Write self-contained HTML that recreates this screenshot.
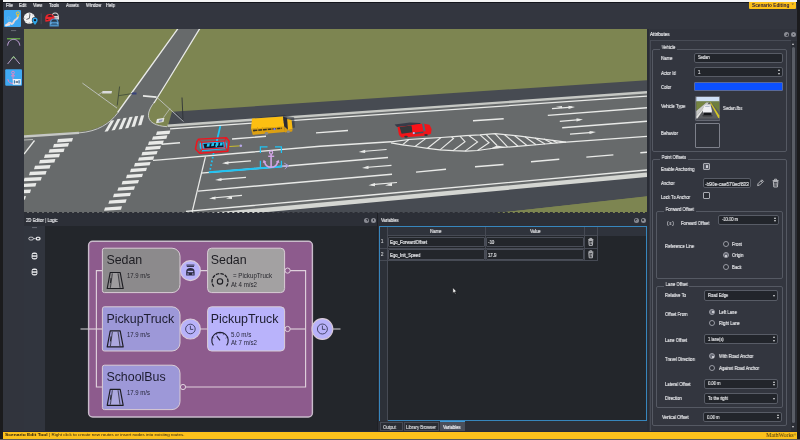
<!DOCTYPE html>
<html lang="en">
<head>
<meta charset="utf-8">
<title>Scenario Editing</title>
<style>
html,body{margin:0;padding:0;background:#1b1b1d;}
#app{position:relative;width:800px;height:440px;overflow:hidden;background:#1b1b1d;font-family:"Liberation Sans",sans-serif;color:#dcdde0;font-size:5.4px;line-height:1;}
#app *{box-sizing:border-box;}
.a{position:absolute;}
.t{position:absolute;white-space:nowrap;line-height:6px;height:6px;}
.lbl{position:absolute;white-space:nowrap;line-height:6px;height:6px;color:#e4e5e8;left:661px;}
.inp{position:absolute;background:#22252b;border:1px solid #585c66;border-radius:2px;color:#e2e3e6;line-height:8px;padding-left:3px;white-space:nowrap;overflow:hidden;}
.gb{position:absolute;border:1px solid #555963;border-radius:2px;}
.gbt{position:absolute;background:#33363f;padding:0 2px;line-height:6px;height:6px;white-space:nowrap;color:#e4e5e8;}
.spin:before,.spin:after{content:"";position:absolute;right:2px;border-left:1.6px solid transparent;border-right:1.6px solid transparent;}
.spin:before{top:1.4px;border-bottom:2px solid #d8d9dc;}
.spin:after{bottom:1.4px;border-top:2px solid #d8d9dc;}
.dd:after{content:"";position:absolute;right:2.5px;top:3.6px;border-left:1.8px solid transparent;border-right:1.8px solid transparent;border-top:2.2px solid #d8d9dc;}
.rad{position:absolute;width:6px;height:6px;border-radius:50%;border:0.75px solid #9a9ca5;background:#2d3038;}
.rad.on{background:#666974;}
.rad.on:after{content:"";position:absolute;left:1.15px;top:1.15px;width:2.2px;height:2.2px;border-radius:50%;background:#ecedf1;}
.rl{position:absolute;white-space:nowrap;line-height:6px;height:6px;color:#e4e5e8;}
.chk{position:absolute;width:7px;height:7px;border:0.8px solid #a9abb2;border-radius:1px;background:#2a2d34;}
.sx{transform:scaleX(.84) translateZ(0);will-change:transform;transform-origin:0 50%;font-size:5.1px;}
.ico{position:absolute;width:5.2px;height:5.2px;border-radius:50%;background:#8b8d95;}
.ico:after{content:"";position:absolute;left:1.8px;top:1.8px;width:1.6px;height:1.6px;border-radius:50%;background:#2c2f37;}
.ico.dm:after{left:1.5px;top:1.5px;width:2.2px;height:2.2px;border-radius:0;background:#2c2f37;transform:rotate(45deg);}
.ico.dm:before{content:"";position:absolute;z-index:1;left:2.1px;top:2.1px;width:1px;height:1px;background:#8b8d95;transform:rotate(45deg);}
.inp .sx{font-size:4.8px;}
.sx{-webkit-text-stroke:0.18px currentColor;}
</style>
</head>
<body>
<div id="app">
  <!-- top white strip -->
  <div class="a" style="left:3px;top:0;width:794px;height:2px;background:#f4f4f4;"></div>
  <!-- menu + toolbar background -->
  <div class="a" style="left:3px;top:2px;width:794px;height:26.5px;background:#33363f;"></div>
  <div class="a" style="left:3px;top:1.9px;width:794px;height:0.9px;background:#14161c;"></div>
  <!-- menu -->
  <div class="t sx" style="left:6px;top:2.4px;color:#e8e9ec;">File</div>
  <div class="t sx" style="left:19px;top:2.4px;color:#e8e9ec;">Edit</div>
  <div class="t sx" style="left:33px;top:2.4px;color:#e8e9ec;">View</div>
  <div class="t sx" style="left:49px;top:2.4px;color:#e8e9ec;">Tools</div>
  <div class="t sx" style="left:66px;top:2.4px;color:#e8e9ec;">Assets</div>
  <div class="t sx" style="left:86px;top:2.4px;color:#e8e9ec;">Window</div>
  <div class="t sx" style="left:106px;top:2.4px;color:#e8e9ec;">Help</div>
  <!-- Scenario Editing badge -->
  <div class="a" style="left:749px;top:2px;width:47.2px;height:6.8px;background:#fcc019;border-radius:0 0 1px 1px;"></div>
  <div class="t" style="left:751.8px;top:2.5px;color:#2a1c3a;font-weight:bold;font-size:4.5px;transform:scaleX(1.05) translateZ(0);transform-origin:0 50%;">Scenario Editing</div>
  <div class="t" style="left:791.6px;top:1.2px;color:#3a2c3a;font-size:3.6px;">˅</div>

  <!-- left tool column -->
  <div class="a" style="left:3px;top:28.5px;width:21px;height:403px;background:#31343d;"></div>

  <svg class="a" style="left:24px;top:28.5px;" width="623" height="184" viewBox="24 28.5 623 184">
<rect x="24" y="28" width="623" height="185" fill="#7d8551"/>
<path d="M24,135 L79,131.4 C98,130 110,122 117.6,112 L178,28 L199.8,28 L168,80 L154.5,101.5 C146,112 143.5,124.5 167,126.2 L647,91 L647,180 L230,216 L24,216 Z" fill="#676a6b"/>
<path d="M172,111.2 L647,79.8 L647,91.5 L168,125 Z" fill="#474b52"/>
<path d="M250,213 L647,175 L647,196 L491,213 Z" fill="#474b52"/>
<path d="M491,213 L647,195.8 L647,213 Z" fill="#7d8551"/>
<path d="M167.5,125.2 L647,91.8" stroke="#c6c8c4" stroke-width="2.4" fill="none"/>
<path d="M24,136 L79,132.4" stroke="#c6c8c4" stroke-width="2.4" fill="none"/>
<path d="M180,217.3 L360,200.8 L647,174.3" stroke="#d4d6d2" stroke-width="4.4" fill="none"/>
<path d="M79,132.4 C98,131 110,123 118,112" stroke="#c6c8c4" stroke-width="1" fill="none"/>
<path d="M154.5,101.5 C146,112 143.5,124.5 167,126.2" stroke="#c6c8c4" stroke-width="1" fill="none"/>
<path d="M178,28 L140.6,80 L117.6,112" stroke="#e9eae8" stroke-width="1.3" fill="none"/>
<path d="M199.8,28 L168,80 L154,102.5" stroke="#e9eae8" stroke-width="1.3" fill="none"/>
<path d="M170.0,128.3 L647.0,95.7" stroke="#e9eae8" stroke-width="1.25" fill="none" />
<path d="M232.0,138.5 L266.0,135.8" stroke="#e9eae8" stroke-width="1.4" fill="none" />
<path d="M316.0,132.4 L348.0,130.0" stroke="#e9eae8" stroke-width="1.4" fill="none" />
<path d="M473.0,120.2 L503.7,118.2" stroke="#e9eae8" stroke-width="1.4" fill="none" />
<path d="M161.5,143.8 L180.0,142.3" stroke="#e9eae8" stroke-width="1.4" fill="none" />
<path d="M547.8,114.9 L647.0,107.2" stroke="#e9eae8" stroke-width="1.4" fill="none" />
<path d="M562.2,127.3 L647.0,120.8" stroke="#e9eae8" stroke-width="1.4" fill="none" />
<path d="M160.0,159.4 L320.0,145.8 L391.0,141.3" stroke="#e9eae8" stroke-width="1.4" fill="none" />
<path d="M153.0,159.9 L160.0,159.4" stroke="#e9eae8" stroke-width="1.4" fill="none" />
<path d="M201.0,172.6 L388.0,157.0" stroke="#e9eae8" stroke-width="1.4" fill="none" />
<path d="M198.0,190.6 L392.0,173.8" stroke="#e9eae8" stroke-width="1.4" fill="none" />
<path d="M186.0,210.9 L360.0,195.5 L647.0,169.5" stroke="#e9eae8" stroke-width="1.35" fill="none" />
<path d="M205.5,156.0 L192.0,212.0" stroke="#e9eae8" stroke-width="1.2" fill="none" />
<path d="M391.0,141.3 L408.8,139.0 L426.0,137.9 L441.0,137.0 L454.0,136.2 L466.0,135.2 L480.0,134.4 L495.0,133.1 L520.0,135.6 L545.0,138.8 L566.0,141.6 L647.0,135.8" stroke="#e9eae8" stroke-width="1.25" fill="none" />
<path d="M391.0,142.4 L402.5,144.4 L415.0,146.0 L427.5,147.8 L440.0,149.4 L453.0,150.2 L466.0,150.6 L477.5,150.0 L495.0,147.5 L520.0,145.6 L545.0,143.5 L566.0,141.6" stroke="#e9eae8" stroke-width="1.25" fill="none" />
<path d="M402.5,144.4 L408.8,139.0" stroke="#e9eae8" stroke-width="1.15" fill="none" />
<path d="M415.0,146.0 L426.0,137.9" stroke="#e9eae8" stroke-width="1.15" fill="none" />
<path d="M427.5,147.8 L441.0,137.0" stroke="#e9eae8" stroke-width="1.15" fill="none" />
<path d="M440.0,149.4 L453.5,138.0 L451.5,136.4" stroke="#e9eae8" stroke-width="1.15" fill="none" />
<path d="M453.0,150.2 L465.0,141.2 L460.0,135.6" stroke="#e9eae8" stroke-width="1.15" fill="none" />
<path d="M465.0,150.6 L477.5,141.4 L468.8,135.0" stroke="#e9eae8" stroke-width="1.15" fill="none" />
<path d="M477.5,150.0 L489.0,142.3 L480.0,134.4" stroke="#e9eae8" stroke-width="1.15" fill="none" />
<path d="M486.0,133.8 L497.0,145.0" stroke="#e9eae8" stroke-width="1.15" fill="none" />
<path d="M495.0,133.1 L507.5,146.3" stroke="#e9eae8" stroke-width="1.15" fill="none" />
<path d="M504.4,134.0 L518.0,145.7" stroke="#e9eae8" stroke-width="1.15" fill="none" />
<path d="M514.4,135.0 L527.0,145.0" stroke="#e9eae8" stroke-width="1.15" fill="none" />
<path d="M525.0,136.2 L536.0,144.3" stroke="#e9eae8" stroke-width="1.15" fill="none" />
<path d="M535.0,137.5 L545.0,143.5" stroke="#e9eae8" stroke-width="1.15" fill="none" />
<path d="M544.0,138.6 L552.5,142.9" stroke="#e9eae8" stroke-width="1.15" fill="none" />
<path d="M552.5,139.8 L557.5,142.5" stroke="#e9eae8" stroke-width="1.15" fill="none" />
<path d="M497,145 L505.5,146.6 L498,147.8 L489,148.8 Z" fill="#e9eae8"/>
<path d="M416.0,171.6 L446.0,168.8" stroke="#e9eae8" stroke-width="1.4" fill="none" />
<path d="M475.0,166.3 L503.5,164.0" stroke="#e9eae8" stroke-width="1.4" fill="none" />
<path d="M531.0,161.3 L559.3,158.7" stroke="#e9eae8" stroke-width="1.4" fill="none" />
<path d="M586.3,156.6 L613.4,154.4" stroke="#e9eae8" stroke-width="1.4" fill="none" />
<path d="M640.3,152.2 L648.0,151.6" stroke="#e9eae8" stroke-width="1.4" fill="none" />
<path d="M225.0,162.4 L251.0,160.3" stroke="#e9eae8" stroke-width="1.2" fill="none" />
<path d="M222,162.8 L228.5,160.7 L228.5,163.9 Z" fill="#e9eae8"/>
<path d="M218.0,179.1 L246.0,176.8" stroke="#e9eae8" stroke-width="1.2" fill="none" />
<path d="M215,179.5 L221.5,177.4 L221.5,180.6 Z" fill="#e9eae8"/>
<path d="M212.0,197.5 L242.0,194.8" stroke="#e9eae8" stroke-width="1.2" fill="none" />
<path d="M209,198.0 L215.5,195.9 L215.5,199.1 Z" fill="#e9eae8"/>
<path d="M232,195.6 L226,198 L232,198.6 Z" fill="#e9eae8"/>
<path d="M361.7,151.0 L386.6,149.0" stroke="#e9eae8" stroke-width="1.2" fill="none" />
<path d="M358.7,151.4 L365.2,149.3 L365.2,152.5 Z" fill="#e9eae8"/>
<path d="M365.0,167.0 L391.5,164.8" stroke="#e9eae8" stroke-width="1.2" fill="none" />
<path d="M362,167.4 L368.5,165.3 L368.5,168.5 Z" fill="#e9eae8"/>
<path d="M371.5,184.2 L397.0,182.0" stroke="#e9eae8" stroke-width="1.2" fill="none" />
<path d="M368.5,184.7 L375.0,182.6 L375.0,185.8 Z" fill="#e9eae8"/>
<path d="M392,182.3 L385,185 L392,185.4 Z" fill="#e9eae8"/>
<path d="M552.0,108.2 L572.0,106.7" stroke="#e9eae8" stroke-width="1.2" fill="none" />
<path d="M575,106.5 L568.5,105.3 L568.5,108.5 Z" fill="#e9eae8"/>
<path d="M556,106.2 L562,107.7 L562,105.6 Z" fill="#e9eae8"/>
<path d="M559.8,120.8 L580.0,119.2" stroke="#e9eae8" stroke-width="1.2" fill="none" />
<path d="M583,119.0 L576.5,117.8 L576.5,121.0 Z" fill="#e9eae8"/>
<path d="M570.0,133.6 L593.0,131.8" stroke="#e9eae8" stroke-width="1.2" fill="none" />
<path d="M596,131.6 L589.5,130.4 L589.5,133.6 Z" fill="#e9eae8"/>
<path d="M104.5,131.2 L111.0,120.0 L114.2,119.7 L107.9,130.8 Z" fill="#e9eae8"/>
<path d="M111.5,130.0 L117.5,118.5 L120.7,118.2 L114.9,129.6 Z" fill="#e9eae8"/>
<path d="M118.5,129.0 L123.5,117.5 L126.7,117.2 L121.9,128.6 Z" fill="#e9eae8"/>
<path d="M125.0,128.0 L129.5,116.5 L132.7,116.2 L128.4,127.6 Z" fill="#e9eae8"/>
<path d="M131.5,126.5 L135.0,115.8 L138.2,115.5 L134.9,126.1 Z" fill="#e9eae8"/>
<path d="M138.0,125.0 L141.0,115.0 L144.2,114.7 L141.4,124.6 Z" fill="#e9eae8"/>
<path d="M58.0,138.4 L73.0,137.6 L72.0,141.1 L57.0,141.9 Z" fill="#e9eae8"/>
<path d="M54.0,143.4 L69.0,142.6 L68.0,146.1 L53.0,146.9 Z" fill="#e9eae8"/>
<path d="M49.6,148.8 L64.6,148.0 L63.6,151.5 L48.6,152.3 Z" fill="#e9eae8"/>
<path d="M45.0,154.0 L60.0,153.2 L59.0,156.7 L44.0,157.5 Z" fill="#e9eae8"/>
<path d="M40.0,159.4 L55.4,158.6 L54.4,162.1 L39.0,162.9 Z" fill="#e9eae8"/>
<path d="M35.0,165.2 L50.6,164.4 L49.6,167.9 L34.0,168.7 Z" fill="#e9eae8"/>
<path d="M30.0,171.2 L46.6,170.4 L45.6,173.9 L29.0,174.7 Z" fill="#e9eae8"/>
<path d="M24.6,177.2 L41.8,176.4 L40.8,179.9 L23.6,180.7 Z" fill="#e9eae8"/>
<path d="M19.0,183.4 L36.4,182.6 L35.4,186.1 L18.0,186.9 Z" fill="#e9eae8"/>
<path d="M14.0,189.8 L31.0,189.0 L30.0,192.5 L13.0,193.3 Z" fill="#e9eae8"/>
<path d="M9.0,196.4 L26.0,195.6 L25.0,199.1 L8.0,199.9 Z" fill="#e9eae8"/>
<path d="M157.0,131.1 L170.4,130.0 L169.4,133.4 L156.0,134.5 Z" fill="#e9eae8"/>
<path d="M153.0,135.9 L167.4,134.8 L166.4,138.2 L152.0,139.3 Z" fill="#e9eae8"/>
<path d="M149.0,141.1 L163.8,140.0 L162.8,143.4 L148.0,144.5 Z" fill="#e9eae8"/>
<path d="M146.0,146.3 L161.0,145.2 L160.0,148.6 L145.0,149.7 Z" fill="#e9eae8"/>
<path d="M142.4,151.5 L157.6,150.4 L156.6,153.8 L141.4,154.9 Z" fill="#e9eae8"/>
<path d="M139.0,156.9 L154.2,155.8 L153.2,159.2 L138.0,160.3 Z" fill="#e9eae8"/>
<path d="M135.0,162.5 L150.6,161.4 L149.6,164.8 L134.0,165.9 Z" fill="#e9eae8"/>
<path d="M131.0,168.3 L147.0,167.2 L146.0,170.6 L130.0,171.7 Z" fill="#e9eae8"/>
<path d="M127.0,174.3 L143.0,173.2 L142.0,176.6 L126.0,177.7 Z" fill="#e9eae8"/>
<path d="M122.6,180.5 L139.0,179.4 L138.0,182.8 L121.6,183.9 Z" fill="#e9eae8"/>
<path d="M118.4,186.9 L135.0,185.8 L134.0,189.2 L117.4,190.3 Z" fill="#e9eae8"/>
<path d="M114.0,193.3 L131.0,192.2 L130.0,195.6 L113.0,196.7 Z" fill="#e9eae8"/>
<path d="M109.4,199.9 L126.6,198.8 L125.6,202.2 L108.4,203.3 Z" fill="#e9eae8"/>
<path d="M105.0,206.9 L122.0,205.8 L121.0,209.2 L104.0,210.3 Z" fill="#e9eae8"/>
<path d="M34.5,140.0 L24.0,153.5" stroke="#e9eae8" stroke-width="1.3" fill="none" />
<path d="M24.0,139.5 L33.0,139.0" stroke="#b9bbb8" stroke-width="1.0" fill="none" />
<path d="M143.0,95.4 L156.5,96.6" stroke="#e9eae8" stroke-width="1.6" fill="none" />
<path d="M157,118.5 L164.5,117.2 L163.5,121.6 L156,122.8 Z" fill="#e2e4e0"/>
<path d="M159,119.4 L162.6,118.8 L162.2,120.8 L158.6,121.4 Z" fill="#8d93b8"/>
<path d="M82.4,82.6 L117.0,107.6" stroke="#c9cbd0" stroke-width="0.8" fill="none" />
<path d="M98.0,94.5 L102.5,91.5" stroke="#c9cbd0" stroke-width="0.7" fill="none" />
<path d="M102.5,90.6 L112,90.6 L111.5,93 L102,93 Z" fill="#d9dadc"/>
<path d="M119.6,86.0 L117.2,105.0" stroke="#3f4a3a" stroke-width="0.9" fill="none" />
<path d="M118.6,95.2 L134.0,92.8" stroke="#3f4a3a" stroke-width="0.8" fill="none" />
<rect x="132" y="92" width="4.5" height="2" fill="#39427c"/>
<path d="M156.5,96.5 L183.5,121.0" stroke="#c9cbd0" stroke-width="0.8" fill="none" />
<path d="M170.0,108.0 L163.5,117.0" stroke="#c9cbd0" stroke-width="0.7" fill="none" />
<path d="M182.0,97.0 L183.0,119.0" stroke="#2f3338" stroke-width="0.9" fill="none" />
<path d="M176.0,112.5 L183.3,120.0" stroke="#2f3338" stroke-width="0.8" fill="none" />
<path d="M250.5,120.5 L283,116.8 L285.5,118 L292.6,119.2 L293.5,129.5 L284.5,131.6 L252.6,134.6 L250.8,129 Z" fill="#2a2f3b" opacity="0.55" transform="translate(1.5,-2.5)"/>
<path d="M251,128 L284.3,125.6 L285,131.4 L252.8,134.4 Z" fill="#dca012"/>
<path d="M252,118.1 L283,116.1 L284.3,125.9 L251,128.3 Z" fill="#fcbf12"/>
<path d="M283,116.3 L287.2,117.2 L288,128.6 L284.3,125.9 Z" fill="#2b2c33"/>
<path d="M287.2,118.6 L291.6,119.6 L292.6,128.8 L288,129.6 Z" fill="#f6b812"/>
<path d="M284.3,126 L288,129.4 L292.6,128.8 L292.2,131 L285,132 Z" fill="#d99c10"/>
<path d="M253,129.3 L282,127 L282.1,128.6 L253.2,130.9 Z" fill="#3a3320"/>
<rect x="257.3" y="126.6" width="0.9" height="4.6" fill="#dca012" transform="rotate(-4 257.3 129)"/>
<rect x="262" y="126.6" width="0.9" height="4.6" fill="#dca012" transform="rotate(-4 262 129)"/>
<rect x="266.8" y="126.6" width="0.9" height="4.6" fill="#dca012" transform="rotate(-4 266.8 129)"/>
<rect x="271.5" y="126.6" width="0.9" height="4.6" fill="#dca012" transform="rotate(-4 271.5 129)"/>
<rect x="276.3" y="126.6" width="0.9" height="4.6" fill="#dca012" transform="rotate(-4 276.3 129)"/>
<rect x="280.5" y="126.6" width="0.9" height="4.6" fill="#dca012" transform="rotate(-4 280.5 129)"/>
<circle cx="274.5" cy="128.6" r="1.2" fill="#7b7cf0"/>
<ellipse cx="266.5" cy="132.9" rx="1.8" ry="1.3" fill="#8a8a88"/>
<ellipse cx="288.3" cy="131.2" rx="1.6" ry="1.2" fill="#8a8a88"/>
<path d="M394.6,124 L410,122 L420,122.4 L421,124 L397,126.6 Z" fill="#2c3040" opacity="0.8"/>
<path d="M397.5,126.5 L424,123.2 L429.5,124.2 L431.6,128.5 L431,133.3 L425.5,135.3 L401.5,137 L399,134.5 Z" fill="#f0151a"/>
<path d="M399.6,126.6 L411.6,125 L412.6,131.8 L401.6,133.2 Z" fill="#35373a"/>
<path d="M411.6,124.4 L422,123.2 L423.4,130.6 L412.6,131.8 Z" fill="#fb1218"/>
<path d="M422,123.2 L424.2,123.6 L425.6,131 L423.4,130.6 Z" fill="#4a6a78"/>
<path d="M413.2,132.2 L423.3,131 L423.5,132.6 L413.4,133.8 Z" fill="#45505c"/>
<circle cx="413.8" cy="132.6" r="1.1" fill="#c8b8f4"/>
<ellipse cx="406" cy="136.3" rx="1.8" ry="1" fill="#33363b"/>
<ellipse cx="426" cy="134.6" rx="1.8" ry="1" fill="#33363b"/>
<path d="M220.3,125.6 L216.8,140.5" stroke="#1fc4f4" stroke-width="1.8" fill="none" />
<path d="M213.6,152.6 L209.8,171.0" stroke="#1fc4f4" stroke-width="1.7" fill="none" stroke-dasharray="1.7 2.1"/>
<path d="M208.8,171.8 L245.0,168.9 L281.8,165.9" stroke="#1fc4f4" stroke-width="2.0" fill="none" />
<path d="M199.8,142.6 L224.8,140.4 L227.2,143 L226.6,148 L203,150.6 L199.8,147.8 Z" fill="#1fb6ee"/>
<path d="M203.4,143.4 L223,141.8 L223.6,146.4 L204.6,148 Z" fill="#0f1726"/>
<path d="M206.6,146.2 l2.8,-0.3 l0.4,-3 l-2.4,0.2 Z" fill="#22c6f6"/>
<path d="M211,145.8 l2.8,-0.3 l0.4,-3 l-2.4,0.2 Z" fill="#22c6f6"/>
<path d="M215.4,145.5 l2.8,-0.3 l0.4,-3 l-2.4,0.2 Z" fill="#22c6f6"/>
<path d="M219.6,145.2 l2.8,-0.3 l0.4,-3 l-2.4,0.2 Z" fill="#22c6f6"/>
<path d="M201.6,150 L226,147.7" stroke="#1fb6ee" stroke-width="1.7" fill="none"/>
<path d="M200.2,143.2 L200.6,147.6" stroke="#22c6f6" stroke-width="1.2" fill="none"/>
<path d="M217.2,139.0 L216.2,146.6" stroke="#1fc4f4" stroke-width="1.6" fill="none" />
<path d="M198.5,138.6 L226.4,137.3 L229.2,141 L227.8,150.7 L199.7,152.7 L195.5,148.5 L197,141 Z" fill="none" stroke="#f0141e" stroke-width="1.45" stroke-linejoin="round"/>
<path d="M201.6,141.7 L224.7,140.5 L225.5,147.3 L202.2,148.8 Z" fill="none" stroke="#f0141e" stroke-width="1.1"/>
<path d="M198.5,138.6 L201.6,141.7 M226.4,137.3 L224.7,140.5 M227.8,150.7 L225.5,147.3 M199.7,152.7 L202.2,148.8" stroke="#f0141e" stroke-width="1" fill="none"/>
<path d="M229.4,146.0 L239.6,145.4" stroke="#c9bc2c" stroke-width="1.0" fill="none" />
<circle cx="240.8" cy="145.3" r="1.3" fill="#b9a8ea"/>
<path d="M260.4,152.4 L260.4,146.4 L267.5,146.4 M275,146.4 L281.4,146.4 L281.4,152.4 M260.4,160.2 L260.4,166.8 M281.4,160.2 L281.4,166" stroke="#1fc4f4" stroke-width="1.25" fill="none"/>
<circle cx="271.1" cy="151.9" r="1.6" fill="none" stroke="#d3a4e6" stroke-width="1.2"/>
<path d="M271.1,153.4 L271.1,167.2" stroke="#d3a4e6" stroke-width="1.6" fill="none"/>
<path d="M268.2,155.8 L274.2,155.8" stroke="#d3a4e6" stroke-width="1.4" fill="none"/>
<path d="M264.4,161 C265.4,165 268,166.8 271.1,166.8 C274.2,166.8 276.8,165 277.8,161" stroke="#d3a4e6" stroke-width="1.5" fill="none"/>
<path d="M262.8,162.4 L263.6,159.2 L266.4,161.4 Z M279.4,162.4 L278.6,159.2 L275.8,161.4 Z" fill="#d3a4e6"/>
<path d="M282,166 L288.4,165.2 M284.2,162.6 L288.6,165.2 L284.8,168.4" stroke="#aa9cdc" stroke-width="1" fill="none"/>
</svg>
    <!-- top toolbar icons -->
  <div class="a" style="left:4.2px;top:10.4px;width:17px;height:16.8px;background:#3fa9f3;border-radius:1px;"></div>
  <svg class="a" style="left:0;top:0;" width="70" height="90" viewBox="0 0 70 90">
    <!-- route icon -->
    <path d="M6.2,25.2 C8,24.2 8.6,22.4 10,22.6 C11.4,22.8 11,24.6 12.4,23.8 C14.4,22.6 13.4,20.4 15.6,19.6 C17,19 17.6,18 17.8,16.8" stroke="#e4d6d8" stroke-width="1.9" fill="none" stroke-linecap="round"/>
    <path d="M6,25.4 L9.6,24.6" stroke="#efe6e6" stroke-width="1.6" stroke-linecap="round"/>
    <circle cx="8.6" cy="18.2" r="1.5" fill="none" stroke="#62b4ea" stroke-width="0.9"/>
    <path d="M7.6,19.3 L8.6,21.6 L9.6,19.3" stroke="#62b4ea" stroke-width="0.8" fill="none"/>
    <circle cx="17.8" cy="13.4" r="1.5" fill="none" stroke="#f1c42e" stroke-width="1"/>
    <path d="M16.7,14.5 L17.8,16.9 L18.9,14.5" stroke="#f1c42e" stroke-width="0.9" fill="none"/>
    <!-- clock icon -->
    <circle cx="29.3" cy="18.2" r="5.6" fill="#f3f3f3"/>
    <path d="M30,13.8 L29.3,18.4 L26.4,19.4" stroke="#3a3c42" stroke-width="0.8" fill="none"/>
    <path d="M29.3,13 v1.1 M29.3,22.3 v1.1 M24.1,18.2 h1.1 M33.4,18.2 h1.1 M25.6,14.5 l.7,.7 M33,14.5 l-.7,.7 M25.6,21.9 l.7,-.7" stroke="#6a6c72" stroke-width="0.55"/>
    <path d="M35,26 C32.8,22.8 31.8,21.8 31.8,20.2 A3.2,3.2 0 1 1 38.2,20.2 C38.2,21.8 37.2,22.8 35,26 Z" fill="#33363f"/>
    <path d="M35,25 C33.2,22.4 32.4,21.6 32.4,20.2 A2.6,2.6 0 1 1 37.6,20.2 C37.6,21.6 36.8,22.4 35,25 Z" fill="#2fa6ea"/>
    <circle cx="35" cy="20.2" r="1.15" fill="#14161c"/>
    <!-- separator -->
    <path d="M41.2,13.4 L41.2,24.2" stroke="#555963" stroke-width="0.6"/>
    <!-- cars icon -->
    <path d="M51.4,17.4 C51.6,13.8 52.8,12.4 55.2,12.4 C57.6,12.4 58.8,13.8 59,17.4 L59,19.6 L51.4,19.6 Z" fill="#d9d7d8"/>
    <path d="M52.6,16 C52.8,14.2 53.6,13.5 55.2,13.5 C56.8,13.5 57.6,14.2 57.8,16 Z" fill="#33363f"/>
    <rect x="52.8" y="17.4" width="4.8" height="0.9" fill="#8d8f96"/>
    <path d="M45.2,17.6 C45.6,15 47.4,14 49.8,14 C52.2,14 53.8,15 54.4,16.8 L54.6,18.2 L53.6,20.4 L47.4,21.4 L45.4,21.8 Z" fill="#e9262d"/>
    <path d="M47.4,16.8 C48,15.5 49,15.1 50.2,15.1 C51.4,15.1 52.4,15.6 52.8,16.8 Z" fill="#3a2328"/>
    <path d="M46.4,19 h2 v0.9 h-2 Z" fill="#3a2328"/>
    <path d="M49.8,22 C50.2,19.4 51.6,18.4 54.2,18.4 C56.8,18.4 58.2,19.4 58.6,22 L58.8,22.6 L58.8,26.4 L49.6,26.4 L49.6,22.6 Z" fill="#4b90c6"/>
    <path d="M51.2,21.8 C51.5,20.1 52.6,19.5 54.2,19.5 C55.8,19.5 56.9,20.1 57.2,21.8 Z" fill="#283848"/>
    <rect x="51.2" y="23.6" width="6" height="1" fill="#2c4660"/>
    <path d="M50.2,22.8 h1.4 v0.8 h-1.4 Z M56.8,22.8 h1.4 v0.8 h-1.4 Z" fill="#a8d2f0"/>
    <!-- left column: handle -->
    <path d="M11,30.6 L16.2,30.6" stroke="#7f828c" stroke-width="0.7"/>
    <!-- arc icon -->
    <path d="M7,38.8 L20.2,38.8" stroke="#74c04a" stroke-width="1.1"/>
    <path d="M7.6,45.6 C8,41.6 10.6,39.4 13.6,39.4 C16.6,39.4 19.4,41.6 19.8,45.6" stroke="#c3a2da" stroke-width="1" fill="none"/>
    <!-- caret icon -->
    <path d="M7.6,64 L13.6,56.6 L19.8,64" stroke="#b79fc8" stroke-width="1" fill="none"/>
    <path d="M11.8,58.8 L13.6,56.6 L15.4,58.8" stroke="#8fd07a" stroke-width="1" fill="none"/>
    <!-- selected anchor tool -->
    <rect x="5.2" y="69.2" width="16.8" height="16.6" rx="1" fill="#3fa9f3"/>
    <circle cx="13" cy="72.6" r="1.4" fill="none" stroke="#ef84c0" stroke-width="0.9"/>
    <path d="M13,74 L13,80.4 M11,75.8 L15,75.8" stroke="#ef84c0" stroke-width="0.9" fill="none"/>
    <path d="M7.8,79.2 C8.4,82.4 10.6,83.6 13,83.4" stroke="#ef84c0" stroke-width="1" fill="none"/>
    <path d="M12.8,79 h8 v5.8 h-8 Z" fill="#eef3f8"/>
    <path d="M13.8,80.2 h1.2 v3.4 h-1.2 Z M18.4,80.2 h1.4 v3.4 h-1.4 Z" fill="#3f7fb8"/>
    <path d="M15.6,81.2 h2.4 v1.6 h-2.4 Z" fill="#5a6a80"/>
  </svg>

  <div class="a" style="left:24px;top:212px;width:623.5px;height:0;border-top:0.9px dashed #2b2d34;"></div>
  <div class="a" style="left:646.6px;top:28.5px;width:0;height:184px;border-left:0.9px dashed #2b2d34;"></div>
    <!-- 2D Editor | Logic panel -->
  <div class="a" style="left:24px;top:213px;width:353.5px;height:13px;background:#2c2f37;"></div>
  <div class="a" style="left:24px;top:226px;width:20.5px;height:205.5px;background:#31353e;"></div>
  <div class="a" style="left:44.5px;top:226px;width:333px;height:205.5px;background:#23262b;"></div>
  <div class="t sx" style="left:25.5px;top:217px;color:#e6e7ea;">2D Editor | Logic</div>
  <div class="ico dm" style="left:364px;top:217.5px;"></div>
  <div class="ico" style="left:371px;top:217.5px;"></div>
  <svg class="a" style="left:24px;top:213px;" width="354" height="218" viewBox="24 213 354 218" font-family="'Liberation Sans',sans-serif">
    <!-- sidebar icons -->
    <path d="M32,227.6 L37,227.6" stroke="#7f828c" stroke-width="0.7"/>
    <rect x="28.8" y="237.2" width="4.6" height="2.8" rx="1.4" fill="none" stroke="#e4e5e8" stroke-width="0.8"/>
    <rect x="35.6" y="236.8" width="5" height="3.6" rx="1.6" fill="#e4e5e8"/>
    <rect x="37" y="237.9" width="2.2" height="1.3" fill="#31353e"/>
    <path d="M33.4,238.6 L35.6,238.6" stroke="#e4e5e8" stroke-width="0.8"/>
    <rect x="31.6" y="252.6" width="5.8" height="7" rx="2.4" fill="#e4e5e8"/>
    <rect x="32.6" y="254" width="3.8" height="1.3" fill="#31353e"/>
    <rect x="32.6" y="256.8" width="3.8" height="1.3" fill="#31353e"/>
    <rect x="31.6" y="268.6" width="5.8" height="7" rx="2.4" fill="#e4e5e8"/>
    <rect x="32.6" y="270" width="3.8" height="1.3" fill="#31353e"/>
    <rect x="32.6" y="272.8" width="3.8" height="1.3" fill="#31353e"/>
    <!-- outer lines -->
    <path d="M80.5,329 L88.5,329 M333,329 L340.5,329" stroke="#d9d5da" stroke-width="1"/>
    <!-- purple container -->
    <rect x="88.6" y="241.2" width="223.8" height="175.8" rx="4" fill="#8d5b8d" stroke="#c9bccb" stroke-width="1.4"/>
    <!-- wires -->
    <g stroke="#dfd0dc" stroke-width="1.15" fill="none">
      <path d="M88.6,329 L102,329"/>
      <path d="M102,270.6 L96.4,270.6 L96.4,387 L102,387"/>
      <path d="M180,270.6 L207.6,270.6 M180,329 L207.6,329"/>
      <path d="M290,270.6 L305.6,270.6 L305.6,387 L186,387"/>
      <path d="M290,329 L305.6,329"/>
    </g>
    <!-- node: Sedan (speed) -->
    <path d="M104.4,248.2 H172 A8,8 0 0 1 180,256.2 V284.6 A8,8 0 0 1 172,292.6 H104.4 A2,2 0 0 1 102.4,290.6 V250.2 A2,2 0 0 1 104.4,248.2 Z" fill="#8c8a8c" stroke="#d9cdd6" stroke-width="1"/>
    <text x="106.4" y="264.3" font-size="12.4" fill="#1d1d22">Sedan</text>
    <text x="127" y="278.2" font-size="6.7" textLength="23" lengthAdjust="spacingAndGlyphs" fill="#26262c">17.9 m/s</text>
    <g id="lane" fill="none">
      <path d="M112.2,272.8 L118.2,272.8 L120,288.2 L110.4,288.2 Z" fill="#ffffff" fill-opacity="0.16" stroke="none"/>
      <path d="M110.2,272.5 L120.2,272.5 L123.2,288.5 L107.2,288.5 Z" stroke="#1d1d22" stroke-width="1.15" stroke-linejoin="round"/>
      <path d="M112.4,273.4 L110.4,287.8 M118,273.4 L120,287.8" stroke="#1d1d22" stroke-width="0.7"/>
      <path d="M111,278 L110.4,283" stroke="#1d1d22" stroke-width="0.9"/>
    </g>
    <!-- node: PickupTruck (speed) -->
    <path d="M104.4,306.8 H172 A8,8 0 0 1 180,314.8 V343 A8,8 0 0 1 172,351 H104.4 A2,2 0 0 1 102.4,349 V308.8 A2,2 0 0 1 104.4,306.8 Z" fill="#9d98d8" stroke="#d9cdd6" stroke-width="1"/>
    <text x="106.4" y="322.7" font-size="12.4" fill="#1d1d30">PickupTruck</text>
    <text x="127" y="336.6" font-size="6.7" textLength="23" lengthAdjust="spacingAndGlyphs" fill="#26263a">17.9 m/s</text>
    <use href="#lane" y="58.4"/>
    <!-- node: SchoolBus -->
    <path d="M104.4,365.2 H172 A8,8 0 0 1 180,373.2 V401.6 A8,8 0 0 1 172,409.6 H104.4 A2,2 0 0 1 102.4,407.6 V367.2 A2,2 0 0 1 104.4,365.2 Z" fill="#9d98d8" stroke="#d9cdd6" stroke-width="1"/>
    <text x="106.4" y="381.2" font-size="12.4" fill="#1d1d30">SchoolBus</text>
    <text x="127" y="395" font-size="6.7" textLength="23" lengthAdjust="spacingAndGlyphs" fill="#26263a">17.9 m/s</text>
    <use href="#lane" y="116.8"/>
    <!-- node: Sedan (action) -->
    <rect x="207.6" y="248.2" width="77" height="44.4" rx="4" fill="#a3a1a2" stroke="#d9cdd6" stroke-width="1"/>
    <text x="210.8" y="264.3" font-size="12.4" fill="#1d1d22">Sedan</text>
    <text x="233" y="278.4" font-size="6.7" textLength="39" lengthAdjust="spacingAndGlyphs" fill="#26262c">= PickupTruck</text>
    <text x="231" y="286.6" font-size="6.7" textLength="26" lengthAdjust="spacingAndGlyphs" fill="#26262c">At 4 m/s2</text>
    <g stroke="#1d1d22" fill="none">
      <path d="M213.8,286.6 A8,8 0 1 1 226.2,286.6" stroke-width="1.3" stroke-dasharray="3.4 1.1"/>
      <circle cx="220" cy="281.4" r="2.7" stroke-width="1.1"/>
    </g>
    <!-- node: PickupTruck (action) -->
    <rect x="207.6" y="306.8" width="77" height="44.2" rx="4" fill="#b9b3fb" stroke="#d9cdd6" stroke-width="1"/>
    <text x="210.8" y="322.7" font-size="12.4" fill="#1d1d30">PickupTruck</text>
    <text x="231" y="336.8" font-size="6.7" textLength="20.3" lengthAdjust="spacingAndGlyphs" fill="#26263a">5.0 m/s</text>
    <text x="231" y="345.2" font-size="6.7" textLength="26" lengthAdjust="spacingAndGlyphs" fill="#26263a">At 7 m/s2</text>
    <g stroke="#1d1d30" fill="none">
      <path d="M213.4,345.4 A8.2,8.2 0 1 1 226.6,345.4" stroke-width="1.1"/>
      <path d="M220,340.4 L216.8,336.2" stroke-width="1.1"/>
      <path d="M213.4,337.6 l1,0.6 M216.4,334.2 l0.5,1 M220,333 l0,1.1 M223.6,334.2 l-0.5,1 M226.6,337.6 l-1,0.6" stroke-width="0.6"/>
    </g>
    <!-- ports -->
    <g fill="#8d5b8d" stroke="#e0d2de" stroke-width="1">
      <circle cx="287.6" cy="270.6" r="2.6"/>
      <circle cx="287.6" cy="329" r="2.6"/>
      <circle cx="183" cy="387" r="2.6"/>
    </g>
    <!-- condition circles -->
    <g fill="#b8b2fa" stroke="#dacbd8" stroke-width="1.1">
      <circle cx="190.4" cy="270.6" r="10"/>
      <circle cx="190.4" cy="329" r="10"/>
      <circle cx="322.4" cy="329" r="10.4"/>
    </g>
    <!-- car icon in circle -->
    <g fill="#2a2a40">
      <rect x="186.4" y="264.6" width="8" height="1" />
      <rect x="186.8" y="266" width="7.2" height="0.9" />
      <path d="M186.2,272 C186.2,269 187.6,268 190.4,268 C193.2,268 194.6,269 194.6,272 L194.6,275.4 L186.2,275.4 Z"/>
    </g>
    <path d="M187.6,270.8 h5.6 v1.4 h-5.6 Z" fill="#b8b2fa"/>
    <path d="M187.2,273.4 h1.6 v1 h-1.6 Z M192,273.4 h1.6 v1 h-1.6 Z" fill="#b8b2fa"/>
    <!-- clock icons -->
    <g stroke="#3a3a5c" fill="none" stroke-width="0.9">
      <circle cx="190.4" cy="329" r="4.8"/>
      <path d="M190.4,325.8 L190.4,329.4 L193.2,329.4"/>
      <circle cx="322.4" cy="329" r="5"/>
      <path d="M322.4,325.6 L322.4,329.4 L325.4,329.4"/>
    </g>
  </svg>

    <!-- Variables panel -->
  <div class="a" style="left:377.5px;top:213px;width:270px;height:218.5px;background:#2c2f37;"></div>
  <div class="a" style="left:377.3px;top:213px;width:0.8px;height:218.5px;background:#1e2025;"></div>
  <div class="t sx" style="left:380.5px;top:217px;color:#e6e7ea;">Variables</div>
  <div class="ico dm" style="left:633.8px;top:217.5px;"></div>
  <div class="ico" style="left:640.6px;top:217.5px;"></div>
  <div class="a" style="left:378.6px;top:225.8px;width:268.2px;height:195.2px;background:#23262b;border:0.9px solid #3786bd;"></div>
  <!-- header row -->
  <div class="a" style="left:379.5px;top:226.6px;width:266.4px;height:9px;background:#2f333c;"></div>
  <div class="a" style="left:379.5px;top:226.6px;width:7.6px;height:194px;background:#2c3038;"></div>
  <div class="a" style="left:386.8px;top:226.6px;width:0.7px;height:194px;background:#464a54;"></div>
  <div class="a" style="left:387px;top:235.4px;width:210px;height:0.7px;background:#464a54;"></div>
  <div class="a" style="left:485px;top:226.6px;width:0.7px;height:34px;background:#464a54;"></div>
  <div class="a" style="left:584px;top:226.6px;width:0.7px;height:34px;background:#464a54;"></div>
  <div class="a" style="left:597px;top:226.6px;width:0.7px;height:34px;background:#464a54;"></div>
  <div class="t sx" style="left:430px;top:228.2px;color:#e0e1e4;">Name</div>
  <div class="t sx" style="left:530px;top:228.2px;color:#e0e1e4;">Value</div>
  <!-- rows -->
  <div class="a" style="left:379.5px;top:247.8px;width:218px;height:0.7px;background:#464a54;"></div>
  <div class="a" style="left:379.5px;top:260.2px;width:218px;height:0.7px;background:#464a54;"></div>
  <div class="a" style="left:387.6px;top:236.6px;width:97px;height:10.8px;border:0.7px solid #4a4e58;border-radius:1px;"></div>
  <div class="a" style="left:486px;top:236.6px;width:97.6px;height:10.8px;border:0.7px solid #4a4e58;border-radius:1px;"></div>
  <div class="a" style="left:387.6px;top:249px;width:97px;height:10.8px;border:0.7px solid #4a4e58;border-radius:1px;"></div>
  <div class="a" style="left:486px;top:249px;width:97.6px;height:10.8px;border:0.7px solid #4a4e58;border-radius:1px;"></div>
  <div class="t sx" style="left:381.4px;top:239.2px;color:#d8d9dc;font-size:4.6px;">1</div>
  <div class="t sx" style="left:381.2px;top:251.6px;color:#d8d9dc;font-size:4.6px;">2</div>
  <div class="t sx" style="left:389.5px;top:239.2px;color:#e6e7ea;">Ego_ForwardOffset</div>
  <div class="t sx" style="left:389.5px;top:251.6px;color:#e6e7ea;">Ego_Init_Speed</div>
  <div class="t sx" style="left:488px;top:239.2px;color:#e6e7ea;">-10</div>
  <div class="t sx" style="left:488px;top:251.6px;color:#e6e7ea;">17.9</div>
  <svg class="a" style="left:584px;top:236px;" width="14" height="26" viewBox="584 236 14 26">
    <g id="trash" stroke="#d6d7da" stroke-width="0.8" fill="none">
      <path d="M588.2,239.6 h5.2 M589.8,239.4 v-1 h2 v1 M588.8,240.4 l0.4,5 h3.2 l0.4,-5 Z"/>
      <path d="M590.1,241.6 v2.6 M591.5,241.6 v2.6" stroke-width="0.6"/>
    </g>
    <use href="#trash" y="12.4"/>
  </svg>
  <!-- tabs -->
  <div class="a" style="left:379.5px;top:421.6px;width:23px;height:9.4px;background:#2a2d34;border:0.7px solid #474b55;"></div>
  <div class="a" style="left:403.5px;top:421.6px;width:35px;height:9.4px;background:#2a2d34;border:0.7px solid #474b55;"></div>
  <div class="a" style="left:439.5px;top:421.2px;width:25.4px;height:9.8px;background:#4a4f5a;border-top:1px solid #3f9ad6;"></div>
  <div class="t sx" style="left:383.4px;top:423.6px;color:#d8d9dc;">Output</div>
  <div class="t sx" style="left:406px;top:423.6px;color:#d8d9dc;">Library Browser</div>
  <div class="t sx" style="left:442.6px;top:423.6px;color:#eeeff2;">Variables</div>
  <!-- mouse cursor -->
  <svg class="a" style="left:451.6px;top:287px;" width="6" height="8.2" viewBox="0 0 8 11">
    <path d="M1,0.6 L1,8.6 L2.9,6.9 L4.2,9.9 L5.4,9.4 L4.1,6.5 L6.6,6.4 Z" fill="#f4f4f4" stroke="#0c0d10" stroke-width="0.9"/>
  </svg>

    <!-- Attributes panel -->
  <div class="a" style="left:647px;top:28.5px;width:2.4px;height:403px;background:#2a2d35;"></div>
  <div class="a" style="left:649.2px;top:28.5px;width:147.4px;height:403px;background:#33363f;"></div>
  <div class="a" style="left:649.6px;top:28.5px;width:147px;height:11.6px;background:#30333c;"></div>
  <div class="a" style="left:649.6px;top:40px;width:141px;height:390.6px;border:0.8px solid #474b55;border-right:none;border-bottom:none;"></div>
  <div class="t" style="left:650.1px;top:30.9px;color:#e6e7ea;font-size:5px;-webkit-text-stroke:0.18px currentColor;transform:scaleX(.93) translateZ(0);transform-origin:0 50%;">Attributes</div>
  <div class="ico dm" style="left:784px;top:32px;"></div>
  <div class="ico" style="left:791px;top:32px;"></div>
  <!-- scrollbar -->
  <div class="a" style="left:790.6px;top:40.6px;width:6px;height:390.6px;background:#2c2f37;"></div>
  <div class="a" style="left:791.6px;top:47.4px;width:3.8px;height:375.2px;background:#595d66;border-radius:1.6px;"></div>
  <div class="a" style="left:791.6px;top:42.6px;width:0;height:0;border-left:1.9px solid transparent;border-right:1.9px solid transparent;border-bottom:2.6px solid #cfd0d4;"></div>
  <div class="a" style="left:791.6px;top:426.4px;width:0;height:0;border-left:1.9px solid transparent;border-right:1.9px solid transparent;border-top:2.6px solid #cfd0d4;"></div>

  <!-- Vehicle group -->
  <div class="gb" style="left:652.4px;top:48.6px;width:134.8px;height:103.6px;"></div>
  <div class="gbt sx" style="left:660px;top:44px;">Vehicle</div>
  <div class="lbl sx" style="top:55px;">Name</div>
  <div class="inp" style="left:694.4px;top:52.6px;width:88.8px;height:10px;"><span class="a sx" style="left:3px;top:1.9px;line-height:6px;">Sedan</span></div>
  <div class="lbl sx" style="top:69.6px;">Actor Id</div>
  <div class="inp spin" style="left:694.4px;top:67px;width:88.8px;height:10px;"><span class="a sx" style="left:3px;top:1.9px;line-height:6px;">1</span></div>
  <div class="lbl sx" style="top:84px;">Color</div>
  <div class="a" style="left:694.4px;top:81.8px;width:88.8px;height:9.4px;background:#0b50ff;border:0.6px solid #5a6a9a;border-radius:1px;"></div>
  <div class="lbl sx" style="top:103px;">Vehicle Type</div>
  <svg class="a" style="left:694.7px;top:96px;" width="25.3" height="25" viewBox="694.7 96 25.3 25">
    <rect x="695.1" y="96.4" width="24.5" height="24.2" rx="1" fill="#4a4d56" stroke="#7d808a" stroke-width="0.7"/>
    <rect x="696" y="97" width="23" height="21.6" fill="#5c5e61"/>
    <rect x="696" y="97" width="23" height="4.5" fill="#cfdff6"/>
    <rect x="696" y="101.3" width="23" height="1.3" fill="#7d8f4c"/>
    <path d="M696,102.5 L706,102.5 L696,111 Z" fill="#76853f"/>
    <path d="M706,102.5 L707.6,102.5 L696,116.6 L696,111 Z" fill="#c9cac8"/>
    <path d="M707.6,102.5 L708.4,102.5 L697,118.6 L696,118.6 L696,116.6 Z" fill="#e6e6e4"/>
    <path d="M711,102.5 L719,102.5 L719,112 Z" fill="#6f7f3c"/>
    <path d="M709.6,102.5 L710.6,102.5 L719,115.4 L719,118 L718,118 Z" fill="#d6c824"/>
    <path d="M706,104.2 h4.4 l0.6,1.6 h-5.6 Z" fill="#d8d8da"/>
    <path d="M703.4,107.4 C703.6,105.6 704.6,105 707,105 C709.4,105 710.6,105.6 710.9,107.4 L711.6,110.6 L711.4,113.4 L702.8,113.4 L702.6,110.6 Z" fill="#f1f1f4"/>
    <path d="M704.4,107 C704.8,106 705.6,105.7 707,105.7 C708.4,105.7 709.4,106 709.8,107 Z" fill="#b4bccb"/>
    <path d="M703,112.6 h8.4 l-0.4,2.6 h-7.6 Z" fill="#17181c"/>
    <path d="M702,115 h10.4 l-0.6,1.6 h-9.2 Z" fill="#3c3d40"/>
  </svg>
  <div class="t sx" style="left:723.4px;top:105px;color:#e4e5e8;">Sedan.fbx</div>
  <div class="lbl sx" style="top:130.4px;">Behavior</div>
  <div class="a" style="left:694.8px;top:123px;width:25px;height:25.2px;border:0.8px solid #7d808a;border-radius:1px;background:#30333b;"></div>

  <!-- Point Offsets group -->
  <div class="gb" style="left:652.4px;top:159.2px;width:134.8px;height:266.8px;"></div>
  <div class="gbt sx" style="left:660px;top:154.2px;">Point Offsets</div>
  <div class="lbl sx" style="top:165.6px;">Enable Anchoring</div>
  <div class="chk" style="left:703.4px;top:163px;background:#565963;"><span class="a" style="left:1.3px;top:1.3px;width:2.8px;height:2.8px;background:#cfd0d6;border-radius:0.6px;"></span></div>
  <div class="lbl sx" style="top:180px;">Anchor</div>
  <div class="inp" style="left:702.6px;top:178px;width:48.6px;height:10px;padding:0;"><span class="a sx" style="left:1.4px;top:1.7px;line-height:6px;font-size:5.7px;">-b90e-cae570ecf833</span></div>
  <svg class="a" style="left:755px;top:177px;" width="28" height="12" viewBox="755 177 28 12">
    <g stroke="#d6d7da" stroke-width="0.8" fill="none">
      <path d="M757.6,185.6 l0.5,-2 l3.8,-3.8 l1.5,1.5 l-3.8,3.8 Z M760.8,180.9 l1.5,1.5"/>
      <path d="M772.6,180.6 h6 M774.6,180.4 v-1.2 h2 v1.2 M773.3,181.4 l0.5,5.6 h3.6 l0.5,-5.6 Z"/>
      <path d="M774.9,182.6 v3.2 M776.3,182.6 v3.2" stroke-width="0.6"/>
    </g>
  </svg>
  <div class="lbl sx" style="top:194.1px;">Lock To Anchor</div>
  <div class="chk" style="left:703.4px;top:192.2px;"></div>

  <!-- Forward Offset -->
  <div class="gb" style="left:656.2px;top:211px;width:127px;height:68px;"></div>
  <div class="gbt sx" style="left:663.6px;top:206px;">Forward Offset</div>
  <div class="t sx" style="left:667.4px;top:220px;color:#c9cad0;letter-spacing:1px;">(x)</div>
  <div class="t sx" style="left:680.6px;top:220px;color:#e4e5e8;">Forward Offset</div>
  <div class="inp spin" style="left:718px;top:214.6px;width:60.6px;height:10px;padding:0;"><span class="a sx" style="left:3px;top:1.9px;line-height:6px;">-10.00 m</span></div>
  <div class="t sx" style="left:665px;top:243px;color:#e4e5e8;">Reference Line</div>
  <div class="rad" style="left:722.8px;top:241.2px;"></div><div class="rl sx" style="left:732px;top:241.2px;">Front</div>
  <div class="rad on" style="left:722.8px;top:252.4px;"></div><div class="rl sx" style="left:732px;top:252.4px;">Origin</div>
  <div class="rad" style="left:722.8px;top:263.6px;"></div><div class="rl sx" style="left:732px;top:263.6px;">Back</div>

  <!-- Lane Offset -->
  <div class="gb" style="left:656.2px;top:286px;width:127px;height:122px;"></div>
  <div class="gbt sx" style="left:663.6px;top:281px;">Lane Offset</div>
  <div class="t sx" style="left:665px;top:292.2px;color:#e4e5e8;">Relative To</div>
  <div class="inp dd" style="left:704px;top:290px;width:74.4px;height:10.6px;padding:0;"><span class="a sx" style="left:3px;top:1.9px;line-height:6px;">Road Edge</span></div>
  <div class="t sx" style="left:665px;top:311.4px;color:#e4e5e8;">Offset From</div>
  <div class="rad on" style="left:709.4px;top:309px;"></div><div class="rl sx" style="left:718.6px;top:309px;">Left Lane</div>
  <div class="rad" style="left:709.4px;top:320.2px;"></div><div class="rl sx" style="left:718.6px;top:320.2px;">Right Lane</div>
  <div class="t sx" style="left:665px;top:336.6px;color:#e4e5e8;">Lane Offset</div>
  <div class="inp spin" style="left:704.4px;top:334px;width:74px;height:10px;padding:0;"><span class="a sx" style="left:3px;top:1.9px;line-height:6px;">1 lane(s)</span></div>
  <div class="t sx" style="left:665px;top:355.6px;color:#e4e5e8;">Travel Direction</div>
  <div class="rad on" style="left:709.4px;top:353.4px;"></div><div class="rl sx" style="left:718.6px;top:353.4px;">With Road Anchor</div>
  <div class="rad" style="left:709.4px;top:364.6px;"></div><div class="rl sx" style="left:718.6px;top:364.6px;">Against Road Anchor</div>
  <div class="t sx" style="left:665px;top:380.8px;color:#e4e5e8;">Lateral Offset</div>
  <div class="inp spin" style="left:704.4px;top:378.6px;width:74px;height:10px;padding:0;"><span class="a sx" style="left:3px;top:1.9px;line-height:6px;">0.00 m</span></div>
  <div class="t sx" style="left:665px;top:395.4px;color:#e4e5e8;">Direction</div>
  <div class="inp dd" style="left:704.4px;top:393px;width:74px;height:10.6px;padding:0;"><span class="a sx" style="left:3px;top:1.9px;line-height:6px;">To the right</span></div>

  <div class="t sx" style="left:661.6px;top:414px;color:#e4e5e8;">Vertical Offset</div>
  <div class="inp spin" style="left:702.6px;top:411.8px;width:79.2px;height:10px;padding:0;"><span class="a sx" style="left:3px;top:1.9px;line-height:6px;">0.00 m</span></div>


  <!-- status bar -->
  <div class="a" style="left:3px;top:430.5px;width:793.8px;height:1.2px;background:#262a3c;"></div>
  <div class="a" style="left:3px;top:431.6px;width:793.8px;height:7.3px;background:#fcc11c;"></div>
  <div class="a" style="left:0;top:438.9px;width:800px;height:1.1px;background:#5c5c5a;"></div>
  <div class="t" style="left:5.4px;top:432.3px;color:#241a10;font-size:4.4px;font-weight:bold;transform:scaleX(1.115) translateZ(0);transform-origin:0 50%;">Scenario Edit Tool</div>
  <div class="t" style="left:48.8px;top:432.3px;color:#241a10;font-size:4.4px;transform:scaleX(1.022) translateZ(0);transform-origin:0 50%;">| Right click to create new routes or insert nodes into existing routes.</div>
  <div class="t" style="left:766px;top:432.2px;color:#4a3208;font-family:'Liberation Serif',serif;font-size:5.9px;line-height:7px;height:7px;">MathWorks<span style="font-size:3px;vertical-align:top;">®</span></div>
</div>
</body>
</html>
